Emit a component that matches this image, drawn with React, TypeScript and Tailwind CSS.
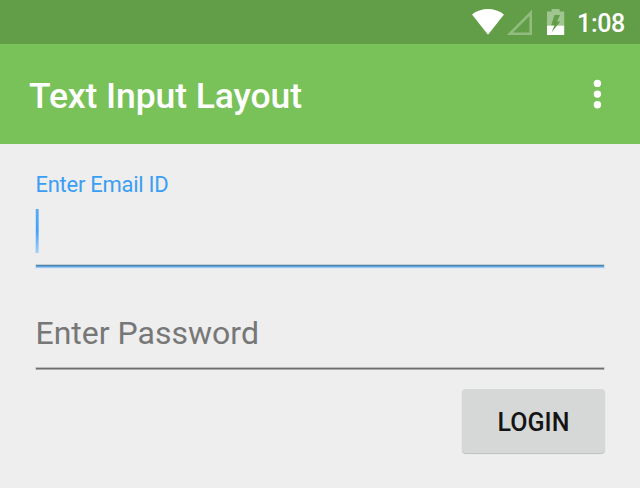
function StatusBar() {
  return (
    <header className="flex h-11 items-start bg-[#629e48] text-white">
      <svg className="h-11 w-[108px] ml-[468px] shrink-0" viewBox="468 0 108 44">
        <path d="M488 34.8 L472 14.6 C481 7.2 495 7.2 504 14.6 Z" fill="#fff" />
        <path
          d="M532 9.8 V35 H506.8 Z M529.4 16 L513 32.4 H529.4 Z"
          fill="#fff"
          fillOpacity=".3"
          fillRule="evenodd"
        />
        <path d="M551.6 9 h8 v2.4 h4.6 V25.5 H547 V11.4 h4.6 Z" fill="#fff" fillOpacity=".4" />
        <path d="M547 25.5 h17.2 V35 H547 Z" fill="#fff" />
        <path d="M554.5 15 H560 L557 21.4 H560.2 L551.6 32.4 L554.5 25.2 H551.2 Z" fill="#629e48" />
      </svg>
      <span className="ml-px mt-[6px] text-[25px] leading-[35px] font-medium tracking-[-0.3px] whitespace-nowrap">
        1:08
      </span>
    </header>
  );
}

function Toolbar() {
  return (
    <div className="flex h-[100px] items-center justify-between bg-[#79c259] pl-[29px] pr-[38px] text-white">
      <h1 className="mt-[3px] text-[35.5px] leading-[44px] font-medium tracking-[-0.09px] whitespace-nowrap">
        Text Input Layout
      </h1>
      <svg className="h-[30px] w-[9px]" viewBox="0 0 9 30" fill="#fff">
        <circle cx="4.4" cy="4.4" r="3.7" />
        <circle cx="4.4" cy="15.1" r="3.7" />
        <circle cx="4.4" cy="25.8" r="3.7" />
      </svg>
    </div>
  );
}

export default function App() {
  return (
    <div className="flex h-[488px] w-[640px] flex-col overflow-hidden bg-[#eeeeee] font-['Roboto',sans-serif]">
      <StatusBar />
      <Toolbar />
      <main className="flex flex-col px-[35px] pt-[27px]">
        <label className="ml-[0.5px] h-[28px] text-[22px] leading-[28px] tracking-[-0.27px] text-[#3b9ef5]">
          Enter Email ID
        </label>
        <div className="mt-[10px] flex h-[44px]">
          <div className="w-px bg-[#c4dff5]" />
          <div className="w-[2px] bg-linear-to-b from-[#59abf6] via-[#40a0f8] via-50% to-[#a6cff3]" />
          <div className="w-px bg-linear-to-b from-[#8ac2f5] via-[#7bbcf7] via-50% to-[#c0dcf3]" />
        </div>
        <div className="mt-[11px] flex flex-col border-x border-[#d5dfe6]">
          <div className="h-px bg-[#c3d0d2]" />
          <div className="h-px bg-[#4f83ad]" />
          <div className="h-px bg-[#62a5df]" />
          <div className="h-px bg-[#9ac8f0]" />
          <div className="h-px bg-[#e0e9f0]" />
        </div>
        <div className="ml-[0.5px] mt-[44px] h-[40px] text-[32px] leading-[40px] text-[#777777]">Enter Password</div>
        <div className="mt-[14px] flex flex-col border-x border-[#d8d8d8]">
          <div className="h-px bg-[#bcbcbc]" />
          <div className="h-px bg-[#6d6d6d]" />
          <div className="h-px bg-[#aaaaaa]" />
        </div>
        <button className="mt-[19px] h-[64px] w-[143px] self-end rounded-[4px] bg-[#d6d8d7] pt-[3px] text-[25px] font-medium text-[#141414] shadow-[0_1px_1px_rgba(0,0,0,0.2)]">
          LOGIN
        </button>
      </main>
    </div>
  );
}
